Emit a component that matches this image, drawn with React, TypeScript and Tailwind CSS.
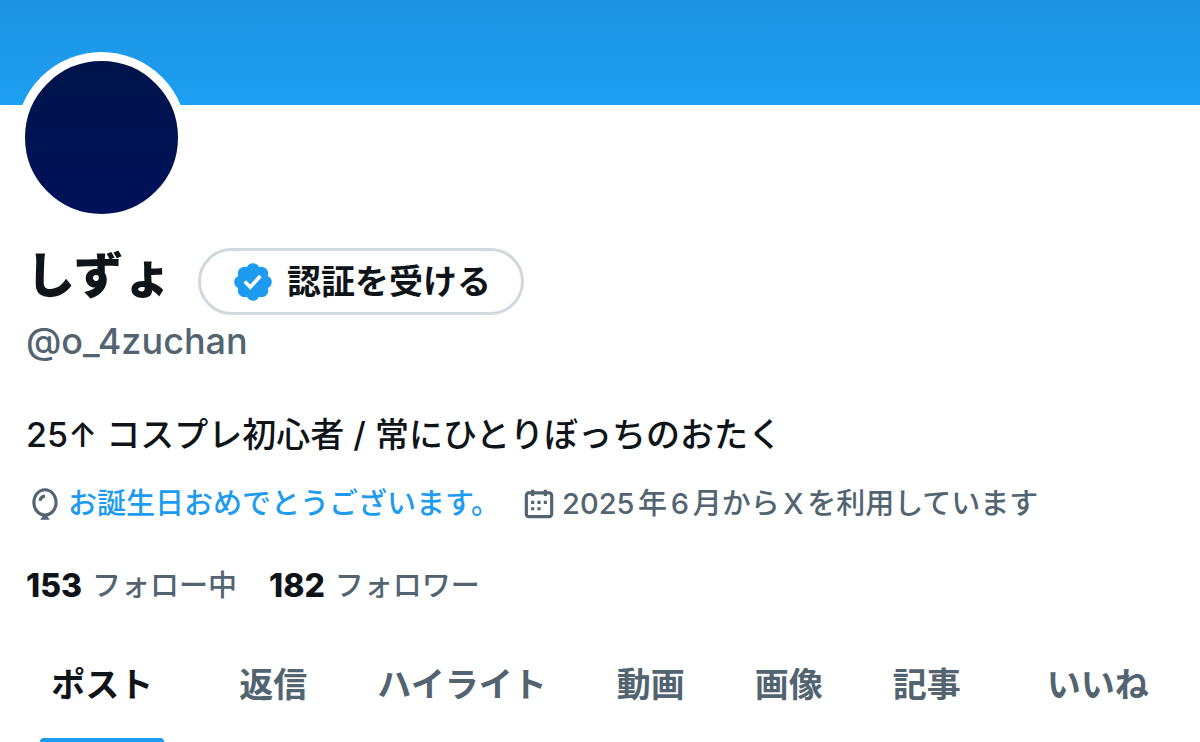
import { useState } from "react";
import { clsx } from "clsx";

interface Tab {
  label: string;
  wide?: boolean;
}

const tabs: Tab[] = [
  { label: "ポスト", wide: true },
  { label: "返信" },
  { label: "ハイライト" },
  { label: "動画" },
  { label: "画像" },
  { label: "記事" },
  { label: "いいね", wide: true },
];

const stats = [
  { count: 153, label: "フォロー中" },
  { count: 182, label: "フォロワー" },
];

function VerifiedIcon() {
  return (
    <svg className="size-11 shrink-0 text-[#1d9bf0]" viewBox="0 0 22 22" fill="currentColor" aria-hidden="true">
      <path d="M20.396 11c-.018-.646-.215-1.275-.57-1.816-.354-.54-.852-.972-1.438-1.246.223-.607.27-1.264.14-1.897-.131-.634-.437-1.218-.882-1.687-.47-.445-1.053-.75-1.687-.882-.633-.13-1.29-.083-1.897.14-.273-.587-.704-1.086-1.245-1.44S11.647 1.62 11 1.604c-.646.017-1.273.213-1.813.568s-.969.854-1.24 1.44c-.608-.223-1.267-.272-1.902-.14-.635.13-1.22.436-1.69.882-.445.47-.749 1.055-.878 1.688-.13.633-.08 1.29.144 1.896-.587.274-1.087.705-1.443 1.245-.356.54-.555 1.17-.574 1.817.02.647.218 1.276.574 1.817.356.54.856.972 1.443 1.245-.224.606-.274 1.263-.144 1.896.13.634.433 1.218.877 1.688.47.443 1.054.747 1.687.878.633.132 1.29.084 1.897-.136.274.586.705 1.084 1.246 1.439.54.354 1.17.551 1.816.569.647-.016 1.276-.213 1.817-.567s.972-.854 1.245-1.44c.604.239 1.266.296 1.903.164.636-.132 1.22-.447 1.68-.907.46-.46.776-1.044.908-1.681s.075-1.299-.165-1.903c.586-.274 1.084-.705 1.439-1.246.354-.54.551-1.17.569-1.816zM9.662 14.85l-3.429-3.428 1.293-1.302 2.072 2.072 4.4-4.794 1.347 1.246z" />
    </svg>
  );
}

function BalloonIcon() {
  return (
    <svg className="size-[38px] shrink-0" viewBox="0 0 24 24" fill="currentColor" aria-hidden="true">
      <path d="M8 10c0-2.21 1.79-4 4-4v2c-1.1 0-2 .9-2 2H8zm12 1c0 4.27-2.69 8.01-6.44 8.83L15 22H9l1.45-2.17C6.7 19.01 4 15.27 4 11c0-4.84 3.46-9 8-9s8 4.16 8 9zm-8 7c3.19 0 6-3 6-7s-2.81-7-6-7-6 3-6 7 2.81 7 6 7z" />
    </svg>
  );
}

function CalendarIcon() {
  return (
    <svg className="size-[38px] shrink-0" viewBox="0 0 24 24" fill="currentColor" aria-hidden="true">
      <path d="M7 4V3h2v1h6V3h2v1h1.5C19.89 4 21 5.12 21 6.5v12c0 1.38-1.11 2.5-2.5 2.5h-13C4.12 21 3 19.88 3 18.5v-12C3 5.12 4.12 4 5.5 4H7zm0 2H5.5c-.27 0-.5.22-.5.5v12c0 .28.23.5.5.5h13c.28 0 .5-.22.5-.5v-12c0-.28-.22-.5-.5-.5H17v1h-2V6H9v1H7V6zm0 6h2v-2H7v2zm0 4h2v-2H7v2zm4-4h2v-2h-2v2zm0 4h2v-2h-2v2zm4-4h2v-2h-2v2z" />
    </svg>
  );
}

export default function App() {
  const [active, setActive] = useState("ポスト");

  return (
    <main className="overflow-hidden bg-white font-['Inter','Noto_Sans_CJK_JP',sans-serif] text-[#0f1419]">
      <div className="h-[105px] bg-linear-to-b from-[#1d94e2] to-[#1d9ff3]" />

      <section className="px-[26px]">
        {/* Avatar overlaps the banner */}
        <div className="-mt-[53px] -ml-[10px] size-[171px] rounded-full border-9 border-white bg-linear-to-b from-[#00144a] to-[#00115a] bg-origin-border" />

        <div className="mt-[25px] flex items-start gap-[26px]">
          <h1 className="text-[49px] leading-[56px] font-extrabold">しずょ</h1>
          <button
            type="button"
            className="flex h-[67px] items-center gap-3 rounded-full border-3 border-[#cfd9de] px-[30px] text-[34px] leading-none font-bold"
          >
            <VerifiedIcon />
            認証を受ける
          </button>
        </div>
        <p className="text-[36px] leading-[52px] font-medium text-[#536471]">@o_4zuchan</p>

        <p className="mt-[42px] text-[34px] leading-[52px] font-medium">
          25↑ コスプレ初心者 / 常にひとりぼっちのおたく
        </p>

        <div className="mt-[17px] flex items-center gap-5 text-[29px] leading-[52px] font-medium text-[#536471]">
          <span className="flex items-center gap-1">
            <BalloonIcon />
            <a href="#birthday" className="text-[#1d9bf0]">
              お誕生日おめでとうございます。
            </a>
          </span>
          <span className="flex items-center gap-1 [text-autospace:normal]">
            <CalendarIcon />
            2025年6月からXを利用しています
          </span>
        </div>

        <div className="mt-[30px] flex gap-8 text-[29px] leading-[52px] font-medium">
          {stats.map((stat) => (
            <a key={stat.label} href="#follows" className="flex gap-[10px]">
              <span className="text-[32px] font-extrabold">{stat.count}</span>
              <span className="text-[#536471]">{stat.label}</span>
            </a>
          ))}
        </div>
      </section>

      <nav className="mt-[31px] flex">
        {tabs.map((tab) => (
          <button
            key={tab.label}
            type="button"
            onClick={() => setActive(tab.label)}
            className={clsx(
              "flex flex-col items-center text-[34px] leading-[84px] font-bold whitespace-nowrap",
              tab.wide && "grow",
              active === tab.label ? "text-[#0f1419]" : "text-[#536471]"
            )}
          >
            <span className="px-[35px]">{tab.label}</span>
            <span
              className={clsx(
                "mt-[11px] h-[5px] w-[124px] rounded-t-sm",
                active === tab.label ? "bg-[#1d9bf0]" : "hidden"
              )}
            />
          </button>
        ))}
      </nav>
    </main>
  );
}
